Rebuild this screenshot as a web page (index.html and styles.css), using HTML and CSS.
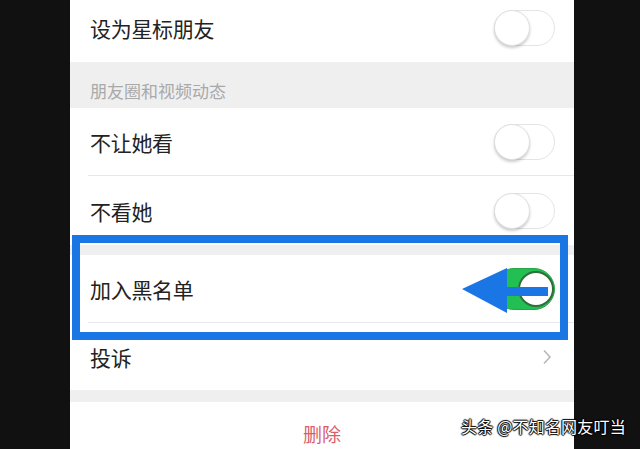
FILE: index.html
```html
<!DOCTYPE html>
<html lang="zh">
<head>
<meta charset="utf-8">
<title>设置</title>
<link rel="stylesheet" href="styles.css">
</head>
<body>
<div class="screen">
  <div class="side side-left"></div>
  <div class="phone">
    <div class="row row-first">
      <span class="label">设为星标朋友</span>
      <span class="toggle"><span class="knob"></span></span>
    </div>
    <div class="section-head">朋友圈和视频动态</div>
    <div class="row row-a divided">
      <span class="label">不让她看</span>
      <span class="toggle"><span class="knob"></span></span>
    </div>
    <div class="row row-b">
      <span class="label">不看她</span>
      <span class="toggle"><span class="knob"></span></span>
    </div>
    <div class="gap gap-small"></div>
    <div class="row row-c divided">
      <span class="label">加入黑名单</span>
      <span class="toggle toggle-on"><span class="knob"></span></span>
    </div>
    <div class="row row-d">
      <span class="label">投诉</span>
      <svg class="chevron" width="10" height="16" viewBox="0 0 10 16"><path d="M2 1.5 L8 8 L2 14.5" fill="none" stroke="#b8b8b8" stroke-width="1.6"/></svg>
    </div>
    <div class="gap gap-large"></div>
    <div class="delete-row">删除</div>
  </div>
  <div class="side side-right"></div>

  <div class="highlight"></div>
  <svg class="arrow" width="100" height="50" viewBox="0 0 100 50">
    <polygon points="2,23 47,2 47,21 88,21 88,30 47,30 47,47" fill="#1976e4"/>
  </svg>
  <div class="watermark">头条 @不知名网友叮当</div>
</div>
</body>
</html>
```
FILE: styles.css
```css
html, body {
  margin: 0;
  padding: 0;
  background: #111111;
}
.screen {
  position: relative;
  display: flex;
  width: 640px;
  height: 449px;
  overflow: hidden;
  font-family: "Noto Sans CJK SC", "Noto Sans", sans-serif;
}
.side {
  background: #111111;
}
.side-left {
  width: 70px;
}
.side-right {
  flex: 1;
}
.phone {
  width: 504px;
  background: #ffffff;
  display: flex;
  flex-direction: column;
}
.row {
  position: relative;
  display: flex;
  align-items: center;
  justify-content: space-between;
  padding: 0 19px 0 20px;
  background: #ffffff;
  flex: none;
}
.row.divided::after {
  content: "";
  position: absolute;
  left: 18px;
  right: 0;
  bottom: 0;
  height: 1px;
  background: #e8e8e8;
}
.row-first { height: 56px; padding-bottom: 6px; }
.row-a { height: 68px; }
.row-b { height: 69px; }
.row-c { height: 68px; }
.row-d { height: 67px; padding-right: 22px; }
.label {
  font-size: 21px;
  color: #222222;
  letter-spacing: -0.3px;
}
.section-head {
  height: 46px;
  box-sizing: border-box;
  background: #efeff0;
  display: flex;
  align-items: center;
  padding-left: 20px;
  padding-top: 11px;
  font-size: 17px;
  color: #a9a9a9;
  flex: none;
}
.gap {
  background: #efeff0;
  flex: none;
}
.gap-small { height: 10px; }
.gap-large { height: 12px; }
.toggle {
  position: relative;
  width: 59px;
  height: 34px;
  border: 1.5px solid #e4e4e4;
  border-radius: 19px;
  background: #ffffff;
}
.knob {
  position: absolute;
  left: -1px;
  top: -1px;
  width: 34px;
  height: 34px;
  border-radius: 50%;
  background: #ffffff;
  border: 1px solid #e0e0e0;
  box-shadow: 0 2px 3px rgba(0,0,0,0.2);
}
.toggle-on {
  height: 40px;
  width: 60px;
  border-color: #2aa64a;
  background: #22bf52;
  border-radius: 21px;
}
.toggle-on .knob {
  left: auto;
  right: 0;
  top: 2px;
  width: 32px;
  height: 32px;
  border: 2px solid #2f6f3c;
  box-shadow: none;
}
.chevron {
  display: block;
}
.delete-row {
  flex: 1;
  background: #ffffff;
  display: flex;
  justify-content: center;
  padding-top: 18px;
  font-size: 19px;
  color: #d8606b;
}
.highlight {
  position: absolute;
  left: 72px;
  top: 235px;
  width: 480px;
  height: 89px;
  border: 8px solid #1976e4;
}
.arrow {
  position: absolute;
  left: 460px;
  top: 266px;
}
.watermark {
  position: absolute;
  left: 461px;
  top: 414px;
  font-size: 16px;
  letter-spacing: 0.2px;
  color: #ffffff;
  white-space: nowrap;
  text-shadow: 0 0 1px #000, 1px 0 1px #000, -1px 0 1px #000, 0 1px 1px #000, 0 -1px 1px #000;
}
```
